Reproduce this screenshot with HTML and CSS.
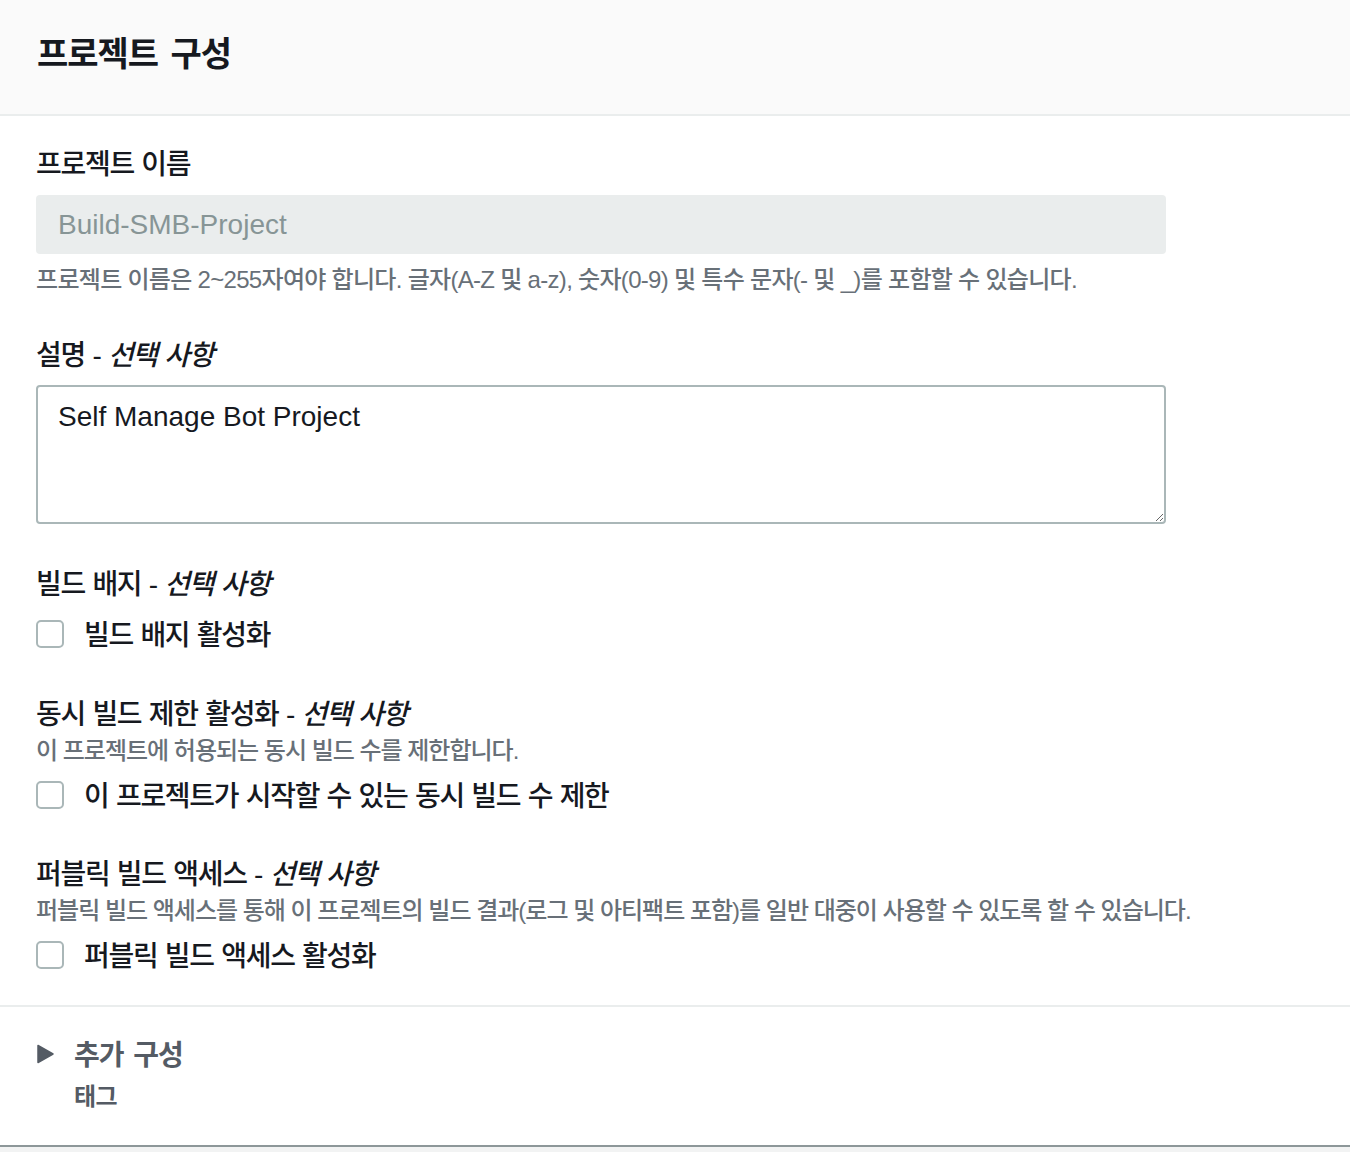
FILE: index.html
```html
<!DOCTYPE html>
<html lang="ko">
<head>
<meta charset="utf-8">
<title>프로젝트 구성</title>
<link rel="stylesheet" href="styles.css">
</head>
<body>
<div class="card">
  <div class="card-header">
    <h2 class="card-title">프로젝트 구성</h2>
  </div>
  <div class="card-body">
    <div class="field field-name">
      <div class="label">프로젝트 이름</div>
      <div class="input disabled">Build-SMB-Project</div>
      <div class="hint">프로젝트 이름은 2~255자여야 합니다. 글자(A-Z 및 a-z), 숫자(0-9) 및 특수 문자(- 및 _)를 포함할 수 있습니다.</div>
    </div>
    <div class="field field-desc">
      <div class="label">설명 - <i>선택 사항</i></div>
      <textarea class="textarea" readonly>Self Manage Bot Project</textarea>
    </div>
    <div class="field field-badge">
      <div class="label">빌드 배지 - <i>선택 사항</i></div>
      <label class="check"><span class="box"></span><span class="check-text">빌드 배지 활성화</span></label>
    </div>
    <div class="field field-limit">
      <div class="label">동시 빌드 제한 활성화 - <i>선택 사항</i></div>
      <div class="desc">이 프로젝트에 허용되는 동시 빌드 수를 제한합니다.</div>
      <label class="check"><span class="box"></span><span class="check-text">이 프로젝트가 시작할 수 있는 동시 빌드 수 제한</span></label>
    </div>
    <div class="field field-public">
      <div class="label">퍼블릭 빌드 액세스 - <i>선택 사항</i></div>
      <div class="desc">퍼블릭 빌드 액세스를 통해 이 프로젝트의 빌드 결과(로그 및 아티팩트 포함)를 일반 대중이 사용할 수 있도록 할 수 있습니다.</div>
      <label class="check"><span class="box"></span><span class="check-text">퍼블릭 빌드 액세스 활성화</span></label>
    </div>
  </div>
  <div class="card-extra">
    <div class="expander">
      <svg class="caret" width="18" height="20" viewBox="0 0 18 20"><path d="M1 1.5 L16 10 L1 18.5 Z" fill="#545b64" stroke="#545b64" stroke-width="1.5" stroke-linejoin="round"/></svg>
      <span class="expander-title">추가 구성</span>
    </div>
    <div class="expander-sub">태그</div>
  </div>
</div>
</body>
</html>
```

FILE: styles.css
```css
html, body {
  margin: 0;
  padding: 0;
}
body {
  background: #f2f3f3;
  font-family: "Liberation Sans", "Noto Sans CJK KR", sans-serif;
  color: #16191f;
}
.card {
  background: #ffffff;
  border-bottom: 2px solid #8d9799;
  box-shadow: 0 1px 1px rgba(0, 28, 36, 0.3);
}
.card-header {
  background: #fafafa;
  border-bottom: 2px solid #eaeded;
  height: 114px;
  padding: 0 37px;
  display: flex;
  align-items: center;
}
.card-title {
  margin: 0;
  font-size: 34px;
  font-weight: 700;
  line-height: 40px;
  letter-spacing: -1px;
  word-spacing: 4px;
  color: #16191f;
  padding-bottom: 6px;
}
.card-body {
  padding: 27px 36px 30px;
  border-bottom: 2px solid #eaeded;
  display: flex;
  flex-direction: column;
}
.label {
  font-size: 28px;
  font-weight: 500;
  line-height: 36px;
  padding-top: 4px;
  letter-spacing: -1.3px;
  word-spacing: 1px;
  color: #16191f;
}
.label i {
  font-style: italic;
}
.input {
  margin-top: 12px;
  width: 1130px;
  height: 59px;
  box-sizing: border-box;
  border-radius: 4px;
  padding: 0 22px;
  font-size: 28px;
  line-height: 59px;
}
.input.disabled {
  background: #eaeded;
  color: #879596;
}
.hint {
  margin-top: 8px;
  font-size: 24px;
  font-weight: 500;
  line-height: 36px;
  letter-spacing: -0.7px;
  color: #687078;
}
.field-desc {
  margin-top: 36px;
}
.textarea {
  display: block;
  margin-top: 11px;
  width: 1130px;
  height: 139px;
  box-sizing: border-box;
  border: 2px solid #aab7b8;
  border-radius: 4px;
  padding: 12px 20px;
  font-family: "Liberation Sans", "Noto Sans CJK KR", sans-serif;
  font-size: 28px;
  line-height: 36px;
  color: #16191f;
  outline: none;
}
.field-badge {
  margin-top: 39px;
}
.check {
  margin-top: 11px;
  display: flex;
  align-items: center;
  height: 40px;
}
.box {
  width: 28px;
  height: 28px;
  box-sizing: border-box;
  border: 2px solid #aab7b8;
  border-radius: 5px;
  background: #fff;
  flex: none;
}
.check-text {
  margin-left: 20px;
  font-size: 28px;
  font-weight: 500;
  line-height: 36px;
  padding-top: 3px;
  letter-spacing: -1.3px;
  word-spacing: 1px;
  color: #16191f;
}
.field-limit {
  margin-top: 39px;
}
.field-public {
  margin-top: 38px;
}
.desc {
  margin-top: 2px;
  font-size: 24px;
  font-weight: 500;
  line-height: 32px;
  letter-spacing: -1px;
  color: #687078;
}
.field-limit .check, .field-public .check {
  margin-top: 8px;
}
.card-extra {
  padding: 27px 37px 33px;
}
.expander {
  display: flex;
  align-items: center;
  height: 40px;
}
.caret {
  flex: none;
}
.expander-title {
  margin-left: 19px;
  font-size: 28px;
  font-weight: 700;
  line-height: 36px;
  padding-top: 3px;
  letter-spacing: -1px;
  word-spacing: 3px;
  color: #545b64;
}
.expander-sub {
  margin-top: 8px;
  margin-left: 37px;
  font-size: 24px;
  font-weight: 700;
  line-height: 30px;
  letter-spacing: -0.5px;
  color: #545b64;
}
```
